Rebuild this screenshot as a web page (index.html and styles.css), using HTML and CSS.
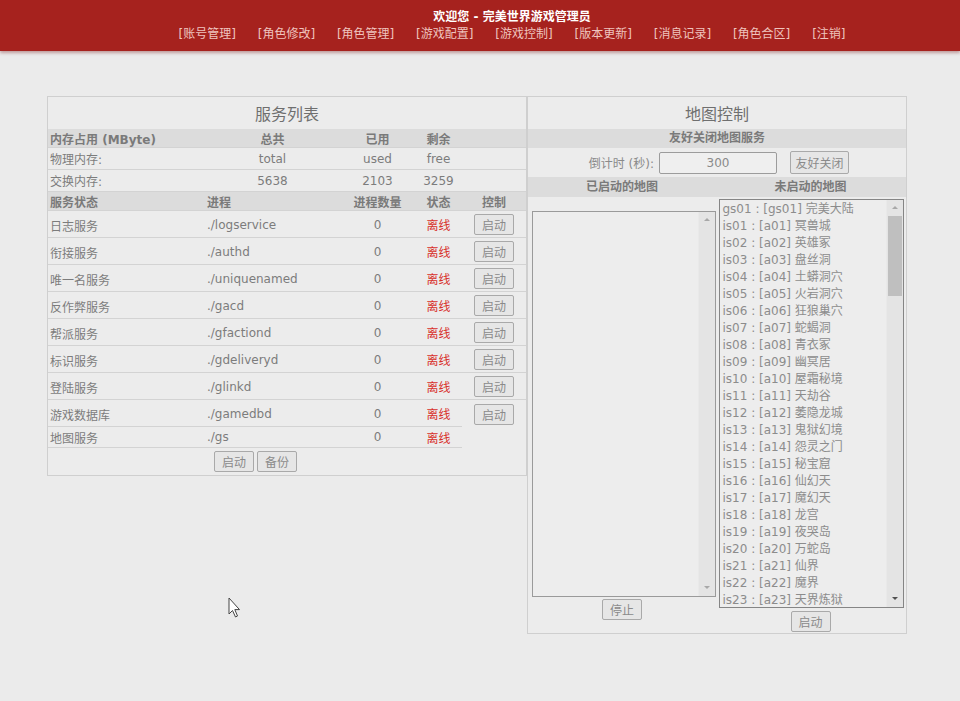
FILE: index.html
```html
<!DOCTYPE html>
<html lang="zh-CN">
<head>
  <meta charset="UTF-8">
  <title>完美世界游戏管理</title>
  <link rel="stylesheet" href="styles.css">
</head>
<body>

<div class="topbar">
  <div class="welcome">欢迎您 - 完美世界游戏管理员</div>
  <div class="nav">
    <a>[账号管理]</a>
    <a>[角色修改]</a>
    <a>[角色管理]</a>
    <a>[游戏配置]</a>
    <a>[游戏控制]</a>
    <a>[版本更新]</a>
    <a>[消息记录]</a>
    <a>[角色合区]</a>
    <a>[注销]</a>
  </div>
</div>

<div class="main">
  <div class="panel services">
    <div class="caption">服务列表</div>

    <div class="row head">
      <div class="c left">内存占用 (MByte)</div><div class="c">总共</div><div class="c">已用</div><div class="c">剩余</div><div class="c"></div>
    </div>
    <div class="row mem">
      <div class="c left">物理内存:</div><div class="c">total</div><div class="c">used</div><div class="c">free</div><div class="c"></div>
    </div>
    <div class="row mem">
      <div class="c left">交换内存:</div><div class="c">5638</div><div class="c">2103</div><div class="c">3259</div><div class="c"></div>
    </div>
    <div class="row head">
      <div class="c left">服务状态</div><div class="c left">进程</div><div class="c">进程数量</div><div class="c">状态</div><div class="c">控制</div>
    </div>

    <div class="row svc">
      <div class="c left">日志服务</div><div class="c left">./logservice</div><div class="c">0</div><div class="c off">离线</div><div class="c"><button class="btn">启动</button></div>
    </div>
    <div class="row svc">
      <div class="c left">衔接服务</div><div class="c left">./authd</div><div class="c">0</div><div class="c off">离线</div><div class="c"><button class="btn">启动</button></div>
    </div>
    <div class="row svc">
      <div class="c left">唯一名服务</div><div class="c left">./uniquenamed</div><div class="c">0</div><div class="c off">离线</div><div class="c"><button class="btn">启动</button></div>
    </div>
    <div class="row svc">
      <div class="c left">反作弊服务</div><div class="c left">./gacd</div><div class="c">0</div><div class="c off">离线</div><div class="c"><button class="btn">启动</button></div>
    </div>
    <div class="row svc">
      <div class="c left">帮派服务</div><div class="c left">./gfactiond</div><div class="c">0</div><div class="c off">离线</div><div class="c"><button class="btn">启动</button></div>
    </div>
    <div class="row svc">
      <div class="c left">标识服务</div><div class="c left">./gdeliveryd</div><div class="c">0</div><div class="c off">离线</div><div class="c"><button class="btn">启动</button></div>
    </div>
    <div class="row svc">
      <div class="c left">登陆服务</div><div class="c left">./glinkd</div><div class="c">0</div><div class="c off">离线</div><div class="c"><button class="btn">启动</button></div>
    </div>
    <div class="row svc">
      <div class="c left">游戏数据库</div><div class="c left">./gamedbd</div><div class="c">0</div><div class="c off">离线</div><div class="c open"><button class="btn">启动</button></div>
    </div>
    <div class="row last">
      <div class="c left">地图服务</div><div class="c left">./gs</div><div class="c">0</div><div class="c off">离线</div><div class="c open"></div>
    </div>
    <div class="row foot">
      <div class="actions"><button class="btn">启动</button><button class="btn">备份</button></div>
    </div>
  </div>

  <div class="panel maps">
    <div class="caption">地图控制</div>
    <div class="subhead">友好关闭地图服务</div>
    <div class="countdown">
      <span class="label">倒计时 (秒):</span>
      <input class="field" type="text" value="300">
      <button class="btn wide">友好关闭</button>
    </div>
    <div class="subhead split">
      <div>已启动的地图</div>
      <div>未启动的地图</div>
    </div>
    <div class="lists">
      <div class="col col-on">
        <div class="listbox short">
          <div class="items"></div>
          <div class="sbar">
            <div class="arrow up"></div>
            <div class="track"></div>
            <div class="arrow down"></div>
          </div>
        </div>
        <button class="btn">停止</button>
      </div>
      <div class="col col-off">
        <div class="listbox tall">
          <div class="items">
            <div>gs01 : [gs01] 完美大陆</div>
            <div>is01 : [a01] 冥兽城</div>
            <div>is02 : [a02] 英雄冢</div>
            <div>is03 : [a03] 盘丝洞</div>
            <div>is04 : [a04] 土蟒洞穴</div>
            <div>is05 : [a05] 火岩洞穴</div>
            <div>is06 : [a06] 狂狼巢穴</div>
            <div>is07 : [a07] 蛇蝎洞</div>
            <div>is08 : [a08] 青衣冢</div>
            <div>is09 : [a09] 幽冥居</div>
            <div>is10 : [a10] 屋霜秘境</div>
            <div>is11 : [a11] 天劫谷</div>
            <div>is12 : [a12] 萎隐龙城</div>
            <div>is13 : [a13] 鬼狱幻境</div>
            <div>is14 : [a14] 怨灵之门</div>
            <div>is15 : [a15] 秘宝窟</div>
            <div>is16 : [a16] 仙幻天</div>
            <div>is17 : [a17] 魔幻天</div>
            <div>is18 : [a18] 龙宫</div>
            <div>is19 : [a19] 夜哭岛</div>
            <div>is20 : [a20] 万蛇岛</div>
            <div>is21 : [a21] 仙界</div>
            <div>is22 : [a22] 魔界</div>
            <div>is23 : [a23] 天界炼狱</div>
          </div>
          <div class="sbar">
            <div class="arrow up"></div>
            <div class="track"><div class="thumb"></div></div>
            <div class="arrow down dark"></div>
          </div>
        </div>
        <button class="btn">启动</button>
      </div>
    </div>
  </div>
</div>

<svg class="cursor" width="14" height="22" viewBox="0 0 14 22">
  <path d="M1 1 L1 17 L4.5 13.5 L7.5 20 L9.5 19 L6.8 12.6 L11.5 12.6 Z" fill="#fff" stroke="#444" stroke-width="1"/>
</svg>

</body>
</html>
```

FILE: styles.css
```css
body {
  margin: 0;
  background-color: #ebebeb;
  font-family: "DejaVu Sans", "Noto Sans CJK SC", sans-serif;
  font-size: 12px;
  color: #7c7c7c;
}

button, input {
  font-family: inherit;
}

/* top red bar */
.topbar {
  height: 51px;
  background-color: #a6221e;
  box-shadow: 0 2px 3px rgba(140, 60, 60, 0.45);
  padding-left: 64px;
  text-align: center;
}

.welcome {
  padding-top: 10px;
  line-height: 15px;
  color: #fff;
  font-weight: bold;
}

.nav {
  margin-top: 1px;
  line-height: 16px;
  color: #efc4be;
}

.nav a {
  margin: 0 9px;
}

/* panels */
.main {
  display: flex;
  align-items: flex-start;
  margin: 45px 0 0 47px;
}

.panel {
  box-sizing: border-box;
  border: 1px solid #cfcfcf;
  background-color: #ececec;
}

.services {
  width: 480px;
}

.maps {
  width: 380px;
}

.caption {
  height: 32px;
  line-height: 35px;
  text-align: center;
  font-size: 16px;
  color: #6f6f6f;
}

/* service table */
.row {
  display: grid;
  grid-template-columns: 157px 135px 75px 47px 64px;
}

.c {
  box-sizing: border-box;
  display: flex;
  align-items: center;
  justify-content: center;
  border-bottom: 1px solid #d3d3d3;
  white-space: nowrap;
}

.c.left {
  justify-content: flex-start;
  padding-left: 2px;
}

.c.open {
  border-bottom: none;
}

.row.head .c {
  height: 19px;
  background-color: #dcdcdc;
  font-weight: bold;
  color: #7a7a7a;
}

.row.mem .c {
  height: 22px;
}

.row.svc .c {
  height: 27px;
  padding-top: 1px;
}

.row.svc .c.left {
  padding-top: 2px;
}

.row.last .c {
  height: 21px;
}

.off {
  color: #d8302a;
}

.row.foot {
  display: flex;
  height: 27px;
}

.actions {
  width: 415px;
  display: flex;
  justify-content: center;
  align-items: center;
  gap: 3px;
}

.btn {
  box-sizing: border-box;
  width: 40px;
  height: 21px;
  padding: 0;
  font-size: 12px;
  color: #8a8a8a;
  background-color: #e6e6e6;
  border: 1px solid #a9a9a9;
  border-radius: 2px;
}

.btn.wide {
  width: 59px;
  height: 23px;
}

/* map panel */
.subhead {
  height: 19px;
  line-height: 19px;
  background-color: #dcdcdc;
  text-align: center;
  font-weight: bold;
  color: #7a7a7a;
}

.subhead.split {
  height: 20px;
  line-height: 20px;
  display: grid;
  grid-template-columns: 188px 189px;
}

.countdown {
  height: 29px;
  display: flex;
  align-items: center;
}

.countdown .label {
  width: 126px;
  text-align: right;
  color: #8a8a8a;
}

.field {
  box-sizing: border-box;
  width: 118px;
  height: 22px;
  margin-left: 5px;
  border: 1px solid #9c9c9c;
  border-radius: 2px;
  background-color: #efefef;
  text-align: center;
  font-size: 12px;
  color: #8a8a8a;
}

.countdown .btn {
  margin-left: 13px;
}

.lists {
  display: grid;
  grid-template-columns: 188px 189px;
  height: 436px;
}

.col {
  display: flex;
  flex-direction: column;
  justify-content: center;
  align-items: center;
}

.listbox {
  box-sizing: border-box;
  display: flex;
  border: 1px solid #9a9a9a;
  background-color: #ededed;
  overflow: hidden;
}

.listbox.short {
  width: 184px;
  height: 386px;
  margin: 0 -2px 2px 2px;
}

.listbox.tall {
  width: 185px;
  height: 409px;
  margin: 0 -1px 3px 0;
  border-color: #858585;
}

.items {
  flex: 1;
  padding: 1px 3px;
  line-height: 17px;
  color: #8c8c8c;
  white-space: nowrap;
  overflow: hidden;
}

.sbar {
  width: 16px;
  display: flex;
  flex-direction: column;
  background-color: #e4e4e4;
  border-left: 1px solid #e9e9e9;
}

.arrow {
  height: 16px;
  display: flex;
  justify-content: center;
  align-items: center;
}

.arrow::before {
  content: "";
  border-left: 3px solid transparent;
  border-right: 3px solid transparent;
}

.arrow.up::before {
  border-bottom: 3px solid #a8a8a8;
}

.arrow.down::before {
  border-top: 3px solid #a8a8a8;
}

.arrow.down.dark::before {
  border-top-color: #505050;
}

.track {
  flex: 1;
  padding: 0 1px;
}

.thumb {
  height: 80px;
  background-color: #bfbfbf;
}

/* mouse pointer from the capture */
.cursor {
  position: absolute;
  left: 228px;
  top: 597px;
}
```
